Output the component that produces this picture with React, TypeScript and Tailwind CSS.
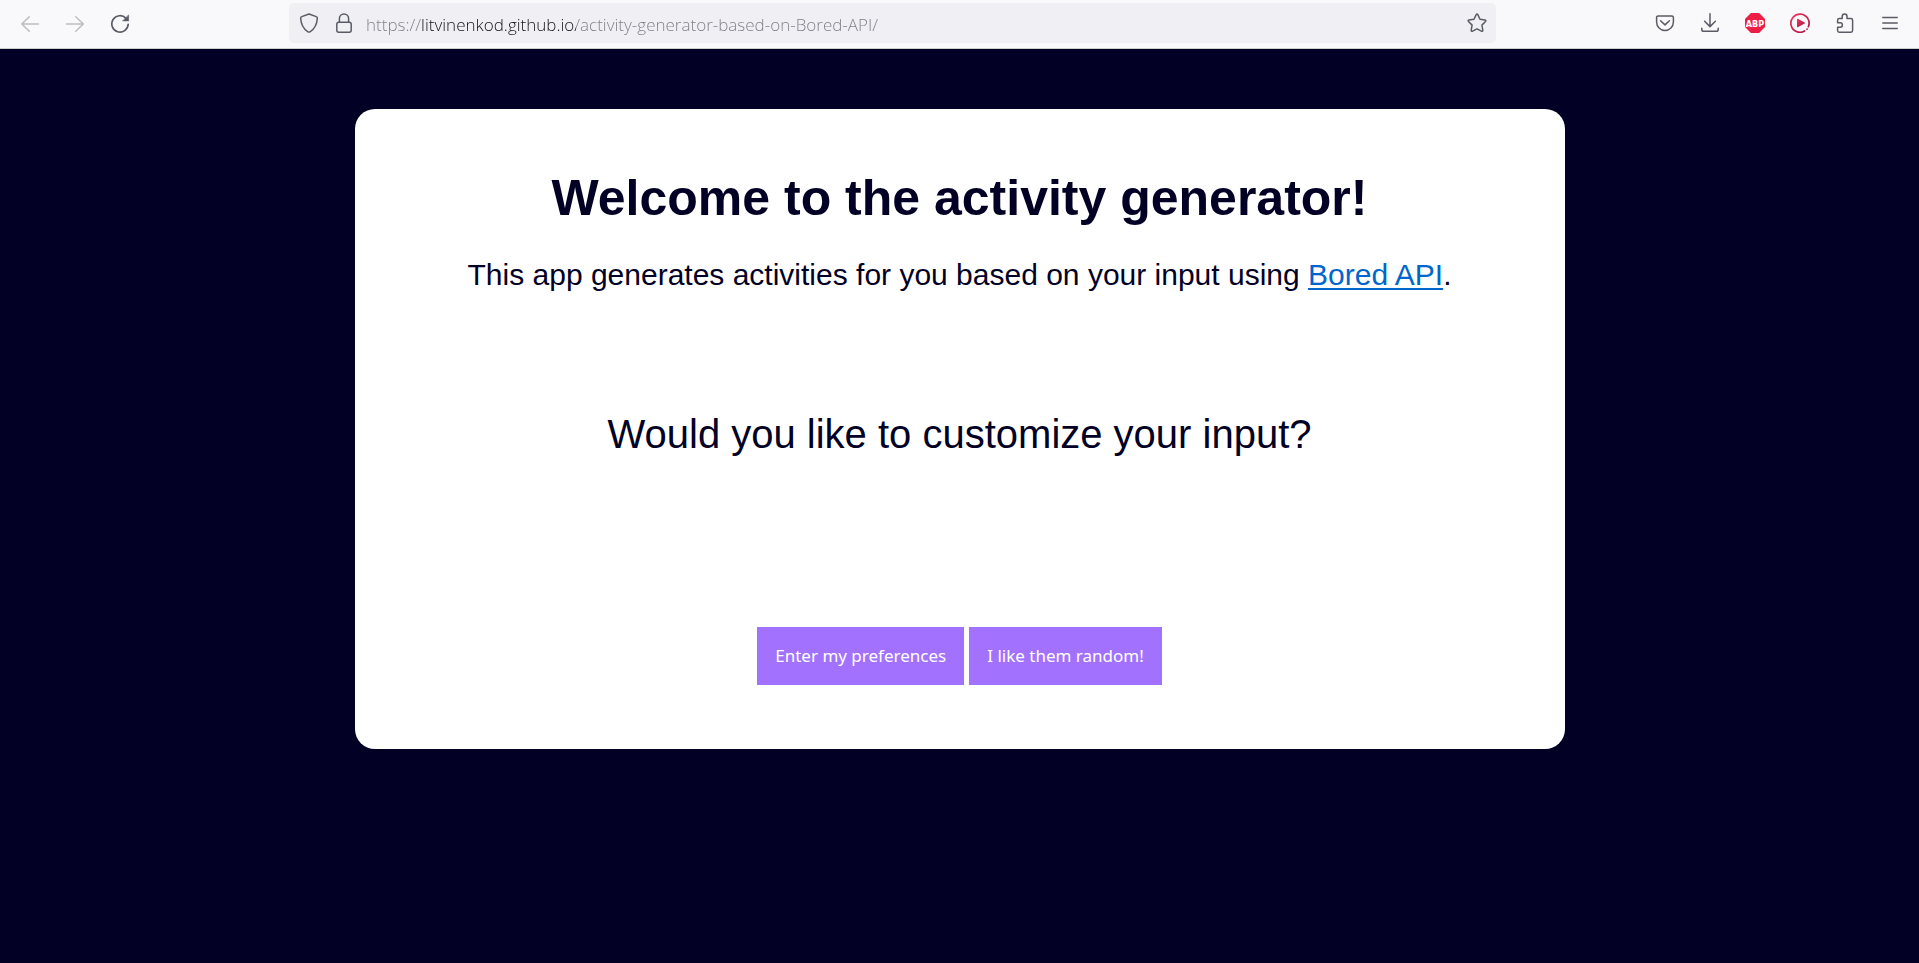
import type { ReactNode } from "react";

function Icon({ children, className = "" }: { children: ReactNode; className?: string }) {
  return (
    <svg
      viewBox="0 0 20 20"
      className={`size-5 shrink-0 ${className}`}
      fill="none"
      stroke="currentColor"
      strokeWidth="1.5"
      strokeLinecap="round"
      strokeLinejoin="round"
      aria-hidden="true"
    >
      {children}
    </svg>
  );
}

function ToolbarButton({
  label,
  disabled = false,
  children,
}: {
  label: string;
  disabled?: boolean;
  children: ReactNode;
}) {
  return (
    <button
      type="button"
      aria-label={label}
      disabled={disabled}
      className="flex h-10 w-[45px] shrink-0 items-center justify-center text-[#5b5b66] disabled:text-[#bdbcc2]"
    >
      {children}
    </button>
  );
}

function AddressBar() {
  return (
    <div className="flex h-10 min-w-0 flex-1 items-center rounded-[5px] bg-[#f0f0f4] pr-[9px] pl-[10px] text-[#5b5b66]">
      <button type="button" aria-label="Tracking protection" className="mr-[15px]">
        <Icon>
          <path d="M10 1 17.2 3.6Q18.4 4 18.3 5.3C18 11.5 15.3 16 11.3 18.7Q10 19.5 8.7 18.7C4.7 16 2 11.5 1.7 5.3Q1.6 4 2.8 3.6Z" />
        </Icon>
      </button>
      <button type="button" aria-label="Site information" className="mr-[12px]">
        <Icon>
          <rect x="2.8" y="9.3" width="14.4" height="9.9" rx="2" />
          <path d="M5.4 9V5.6a4.6 4.6 0 0 1 9.2 0V9" />
        </Icon>
      </button>
      <input
        type="text"
        aria-label="Address"
        defaultValue="https://litvinenkod.github.io/activity-generator-based-on-Bored-API/"
        className="h-full min-w-0 flex-1 bg-[linear-gradient(90deg,#7c7c84_55px,#15141a_55px,#15141a_210px,#7c7c84_210px)] bg-clip-text pt-[2px] font-['Open_Sans','Noto_Sans',sans-serif] text-[17px] font-[340] text-transparent caret-black outline-none"
      />
      <button type="button" aria-label="Bookmark this page">
        <Icon>
          <path d="M9.2 1.6q.8-1.3 1.6 0l2.2 4.6 5 .7q1.5.4.5 1.6l-3.6 3.6.9 5.1q0 1.6-1.4 1L10 15.8l-4.4 2.4q-1.4.6-1.4-1l.9-5.1-3.6-3.6q-1-1.2.5-1.6l5-.7Z" />
        </Icon>
      </button>
    </div>
  );
}

function BrowserToolbar() {
  return (
    <header className="flex h-[49px] items-center border-b border-[#ccccc8] bg-[#f9f9fb] px-[7px] pb-[2px]">
      <ToolbarButton label="Back" disabled>
        <Icon>
          <path d="M18.5 11H1.8M9.3 3.7 1.8 11l7.5 7.3" />
        </Icon>
      </ToolbarButton>
      <ToolbarButton label="Forward" disabled>
        <Icon>
          <path d="M1.5 11h16.8M10.8 3.7 18.3 11l-7.5 7.3" />
        </Icon>
      </ToolbarButton>
      <ToolbarButton label="Reload">
        <Icon>
          <path d="M16 5.3A8.2 8.2 0 1 0 18.2 11.3" strokeWidth="1.7" />
          <path d="M18.6 2.2v5.7h-5.7Z" fill="currentColor" strokeWidth="0.6" />
        </Icon>
      </ToolbarButton>
      <div className="w-[147px] shrink" />
      <AddressBar />
      <div className="w-[146px] shrink" />
      <ToolbarButton label="Save to Pocket">
        <Icon>
          <path d="M3.2 3h13.6Q18.4 3 18.4 4.6V9a8.4 8.4 0 0 1-16.8 0V4.6Q1.6 3 3.2 3Z" />
          <path d="m5.6 7.8 4.4 4.1 4.4-4.1" />
        </Icon>
      </ToolbarButton>
      <ToolbarButton label="Downloads">
        <Icon>
          <path d="M10 .8v12.6M4.6 8.2l5.4 5.4 5.4-5.4" />
          <path d="M1.8 15.2v1.2q0 1.8 1.8 1.8h12.8q1.8 0 1.8-1.8v-1.2" />
        </Icon>
      </ToolbarButton>
      <ToolbarButton label="Adblock Plus">
        <svg viewBox="0 0 20 20" className="size-5" aria-hidden="true">
          <path d="M5.9 0h8.2L20 5.9v8.2L14.1 20H5.9L0 14.1V5.9Z" fill="#ed1e45" />
          <text
            x="10"
            y="13.5"
            textAnchor="middle"
            fill="#fff"
            className="font-['DejaVu_Sans_Condensed','Roboto',sans-serif] text-[9px] font-bold"
          >
            ABP
          </text>
        </svg>
      </ToolbarButton>
      <ToolbarButton label="Video player">
        <svg viewBox="0 0 20 20" className="size-5" fill="none" aria-hidden="true">
          <defs>
            <linearGradient id="ring" x1="0" y1="0" x2="1" y2="1">
              <stop offset="0" stopColor="#f0355f" />
              <stop offset="1" stopColor="#a81440" />
            </linearGradient>
          </defs>
          <path
            d="M14.6 18A9.1 9.1 0 1 1 18.4 13.6"
            stroke="url(#ring)"
            strokeWidth="1.7"
            strokeLinecap="round"
          />
          <path d="M17 16.1h.1" stroke="#b01643" strokeWidth="1.7" strokeLinecap="round" />
          <path d="M7 6.3q0-.9.8-.5l6.8 3.7q.8.5 0 1l-6.8 3.7q-.8.4-.8-.5Z" fill="url(#ring)" />
        </svg>
      </ToolbarButton>
      <ToolbarButton label="Extensions">
        <Icon>
          <path d="M2.6 17.6v-3.4h2.6a2.2 2.2 0 0 0 0-4.4H2.6V7.2q0-1.6 1.6-1.6h3V3.4a2.4 2.4 0 0 1 4.8 0v2.2h4q1.6 0 1.6 1.6v10.4q0 1.6-1.6 1.6H4.2q-1.6 0-1.6-1.6Z" />
        </Icon>
      </ToolbarButton>
      <ToolbarButton label="Open application menu">
        <Icon>
          <path d="M2.8 4.5h14.4M2.8 10h14.4M2.8 15.5h14.4" />
        </Icon>
      </ToolbarButton>
    </header>
  );
}

function ChoiceButton({ children }: { children: ReactNode }) {
  return (
    <button
      type="button"
      className="h-[58px] bg-[#a272ff] px-[18px] font-['Noto_Sans',sans-serif] text-[17px] text-white"
    >
      {children}
    </button>
  );
}

export default function App() {
  return (
    <div className="flex min-h-screen flex-col bg-[#020024]">
      <BrowserToolbar />
      <main className="mx-auto my-[60px] flex w-full max-w-[1210px] flex-col items-center rounded-[20px] bg-white px-8 pt-[60px] pb-[64px] text-center font-['Liberation_Sans',Arial,sans-serif] text-[#020024]">
        <h1 className="text-[50px] leading-[58px] font-bold">Welcome to the activity generator!</h1>
        <p className="mt-[31px] text-[30px] leading-[34px]">
          This app generates activities for you based on your input using{" "}
          <a
            href="https://www.boredapi.com/"
            className="text-[#0066cc] underline decoration-2 underline-offset-[3px]"
          >
            Bored API
          </a>
          .
        </p>
        <p className="mt-[119px] text-[40px] leading-[46px]">Would you like to customize your input?</p>
        <div className="mt-[170px] flex flex-wrap justify-center gap-[5px]">
          <ChoiceButton>Enter my preferences</ChoiceButton>
          <ChoiceButton>I like them random!</ChoiceButton>
        </div>
      </main>
    </div>
  );
}
